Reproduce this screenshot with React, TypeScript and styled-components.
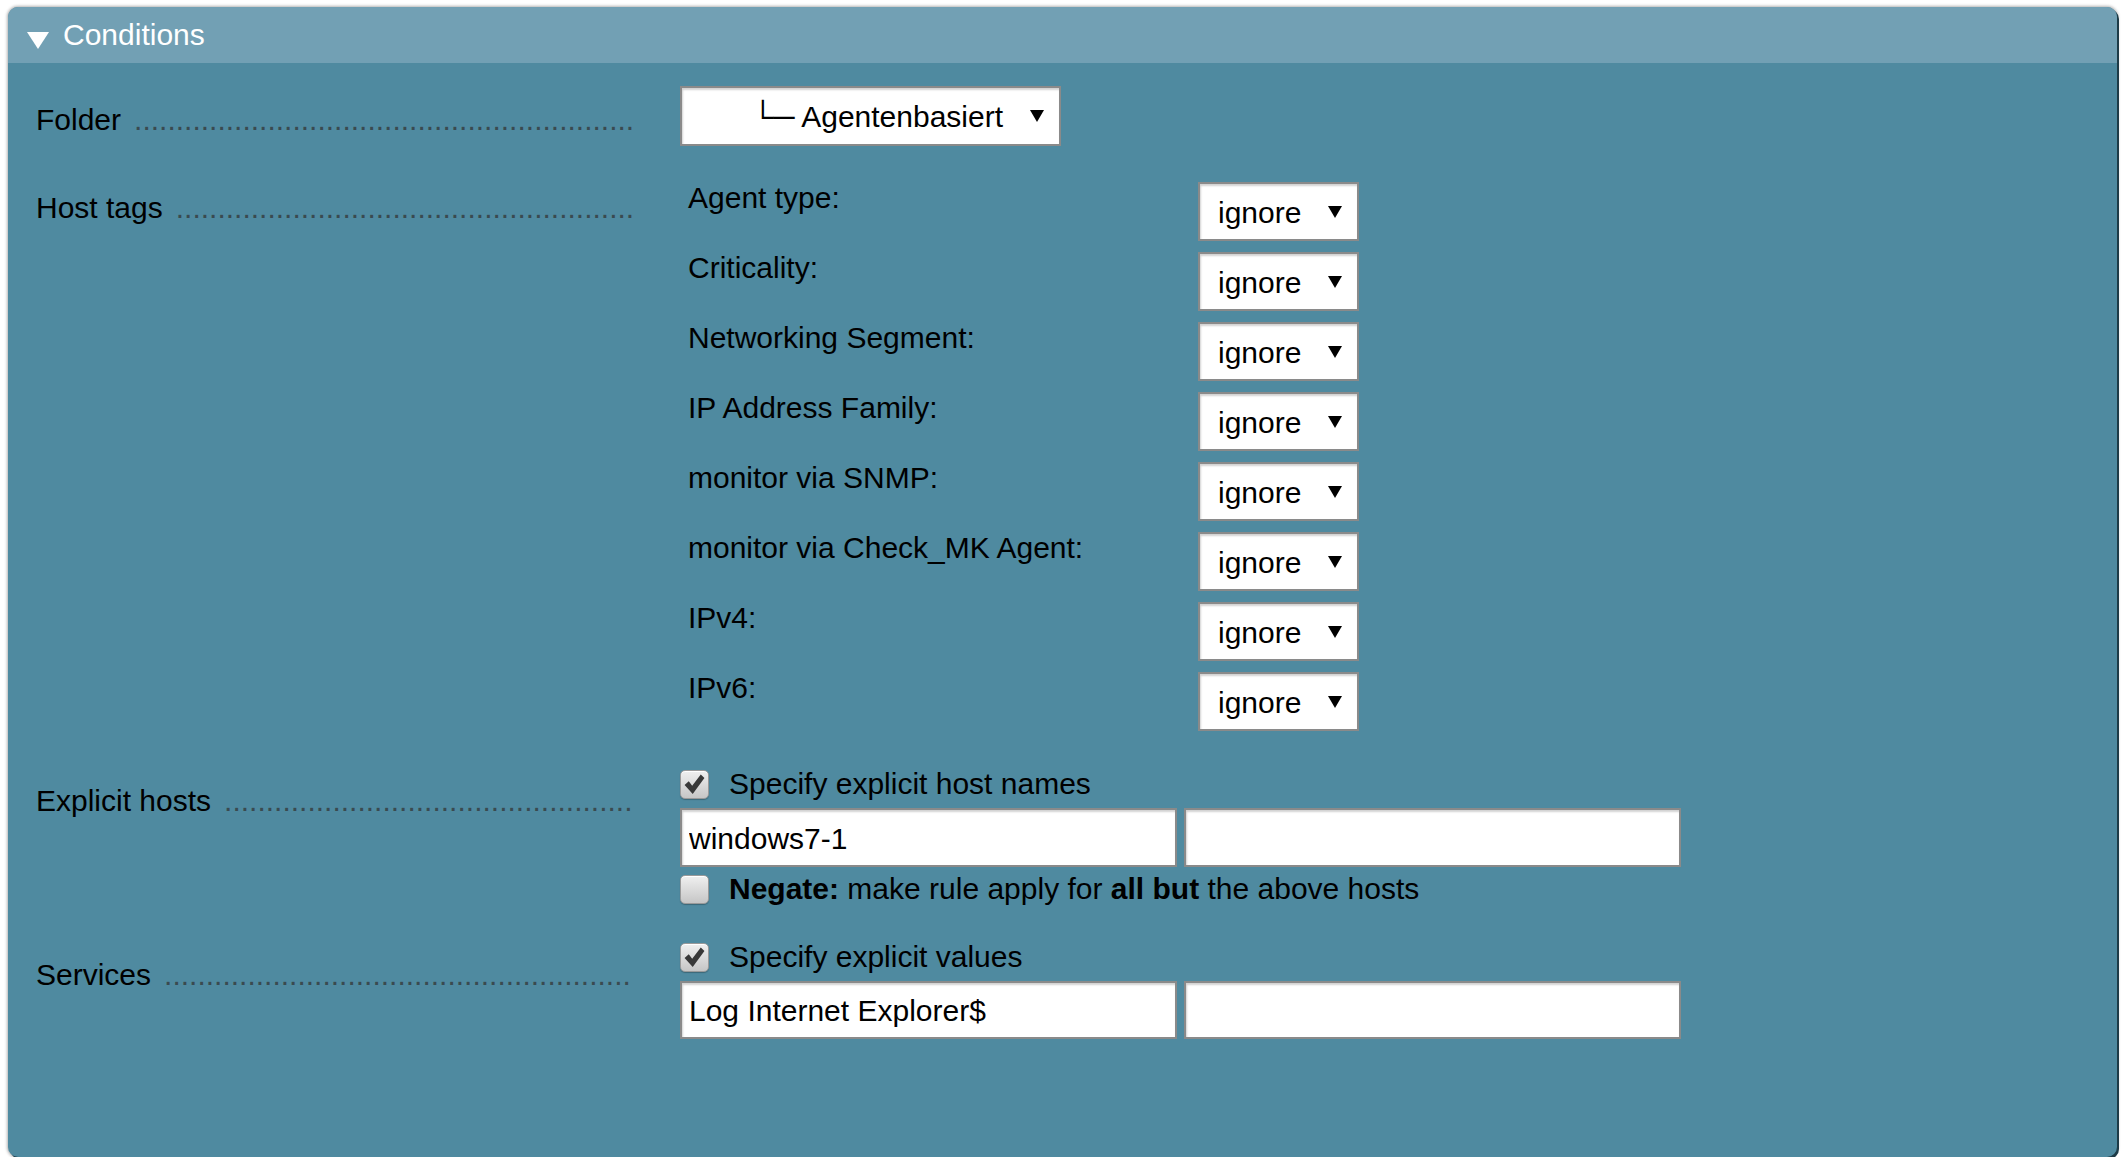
import React from "react";
import styled, { createGlobalStyle } from "styled-components";

const GlobalStyle = createGlobalStyle`
  html, body { margin: 0; padding: 0; background: #ffffff; }
  body {
    font-family: "Liberation Sans", Arial, Helvetica, sans-serif;
    font-size: 30px;
    color: #000;
  }
  * { box-sizing: border-box; }
`;

const Page = styled.div`
  padding: 7px 0 0 8px;
`;

const Panel = styled.section`
  width: 2109px;
  height: 1150px;
  display: flex;
  flex-direction: column;
  background: #4f8aa0;
  border-radius: 10px;
  overflow: hidden;
  box-shadow: 2px 2px 0 #1d3b47, 0 0 3px 1px rgba(0, 0, 0, 0.3);
`;

const Header = styled.header`
  height: 56px;
  flex: none;
  display: flex;
  align-items: center;
  gap: 14px;
  padding-left: 19px;
  background: #72a0b4;
  color: #ffffff;
  line-height: 34px;
`;

const Triangle = styled.span`
  width: 0;
  height: 0;
  margin-top: 11px;
  border-left: 11px solid transparent;
  border-right: 11px solid transparent;
  border-top: 17px solid #ffffff;
`;

const Body = styled.div`
  flex: 1;
  display: flex;
  flex-direction: column;
`;

const Row = styled.div`
  display: grid;
  grid-template-columns: 672px 1fr;
  align-items: start;
`;

const LabelCell = styled.div<{ $top: number }>`
  display: flex;
  align-items: baseline;
  padding: ${(p) => p.$top}px 45px 0 28px;
  line-height: 34px;
  white-space: nowrap;
`;

const Leader = styled.span`
  flex: 1;
  min-width: 0;
  overflow: hidden;
  margin-left: 13px;
  color: #3a4a50;
  white-space: nowrap;
`;

const ContentCell = styled.div<{ $top: number }>`
  padding-top: ${(p) => p.$top}px;
  display: flex;
  flex-direction: column;
  align-items: flex-start;
`;

const SelectBox = styled.div<{ $w: number; $h: number; $pl: number }>`
  width: ${(p) => p.$w}px;
  height: ${(p) => p.$h}px;
  display: flex;
  align-items: center;
  padding: 2px 15px 0 ${(p) => p.$pl}px;
  background: #ffffff;
  border: 2px solid #8a8a8a;
  box-shadow: inset 1px 2px 2px rgba(0, 0, 0, 0.18);
  line-height: 34px;
  white-space: nowrap;
`;

const Caret = styled.span`
  margin-left: auto;
  margin-top: -2px;
  width: 0;
  height: 0;
  border-left: 7px solid transparent;
  border-right: 7px solid transparent;
  border-top: 12px solid #000;
`;

const TagGrid = styled.div`
  display: grid;
  grid-template-columns: 518px 161px;
  row-gap: 11px;
`;

const TagLabel = styled.div`
  padding-left: 8px;
  line-height: 31px;
  white-space: nowrap;
`;

const CheckLine = styled.div`
  display: flex;
  align-items: center;
  gap: 20px;
  height: 34px;
  line-height: 34px;
  white-space: nowrap;
`;

const CheckBox = styled.span`
  width: 29px;
  height: 29px;
  flex: none;
  display: flex;
  align-items: center;
  justify-content: center;
  border: 1px solid #9a9a9a;
  border-radius: 5px;
  background: linear-gradient(#f0f0f0, #c6c6c6);
  box-shadow: inset 0 1px 0 #ffffff, 0 1px 1px rgba(0, 0, 0, 0.25);
`;

const InputRow = styled.div<{ $mt: number }>`
  display: flex;
  gap: 7px;
  margin-top: ${(p) => p.$mt}px;
`;

const TextInput = styled.input<{ $h: number }>`
  width: 497px;
  height: ${(p) => p.$h}px;
  margin: 0;
  padding: 2px 7px 0 7px;
  border: 2px solid #8a8a8a;
  border-radius: 0;
  background: #ffffff;
  box-shadow: inset 1px 2px 2px rgba(0, 0, 0, 0.18);
  font: inherit;
  font-size: 30px;
  color: #000;
  outline: none;
`;

const NegateLine = styled(CheckLine)`
  margin-top: 5px;
`;

const Check: React.FC<{ checked?: boolean }> = ({ checked }) => (
  <CheckBox>
    {checked && (
      <svg width="23" height="23" viewBox="0 0 22 22">
        <path
          d="M1.5 11.5 L5.5 8 L8.8 12.2 L17 1.5 L20.5 4.8 L9.3 20 Z"
          fill="#383838"
        />
      </svg>
    )}
  </CheckBox>
);

const Label: React.FC<{ top: number; text: string; dots: number }> = ({
  top,
  text,
  dots,
}) => (
  <LabelCell $top={top}>
    <span>{text}</span>
    <Leader>{".".repeat(dots)}</Leader>
  </LabelCell>
);

const TAGS = [
  "Agent type:",
  "Criticality:",
  "Networking Segment:",
  "IP Address Family:",
  "monitor via SNMP:",
  "monitor via Check_MK Agent:",
  "IPv4:",
  "IPv6:",
];

export default function App() {
  return (
    <Page>
      <GlobalStyle />
      <Panel>
        <Header>
          <Triangle />
          <span>Conditions</span>
        </Header>
        <Body>
          <Row>
            <Label top={40} text="Folder" dots={60} />
            <ContentCell $top={23}>
              <SelectBox $w={381} $h={60} $pl={70}>
                <span>└─ Agentenbasiert</span>
                <Caret />
              </SelectBox>
            </ContentCell>
          </Row>
          <Row>
            <Label top={45} text="Host tags" dots={55} />
            <ContentCell $top={36}>
              <TagGrid>
                {TAGS.map((t) => (
                  <React.Fragment key={t}>
                    <TagLabel>{t}</TagLabel>
                    <SelectBox $w={161} $h={59} $pl={18}>
                      <span>ignore</span>
                      <Caret />
                    </SelectBox>
                  </React.Fragment>
                ))}
              </TagGrid>
            </ContentCell>
          </Row>
          <Row>
            <Label top={53} text="Explicit hosts" dots={49} />
            <ContentCell $top={36}>
              <CheckLine>
                <Check checked />
                <span>Specify explicit host names</span>
              </CheckLine>
              <InputRow $mt={7}>
                <TextInput $h={59} readOnly defaultValue="windows7-1" />
                <TextInput $h={59} readOnly defaultValue="" />
              </InputRow>
              <NegateLine>
                <Check />
                <span>
                  <b>Negate:</b> make rule apply for <b>all but</b> the above hosts
                </span>
              </NegateLine>
            </ContentCell>
          </Row>
          <Row>
            <Label top={52} text="Services" dots={56} />
            <ContentCell $top={34}>
              <CheckLine>
                <Check checked />
                <span>Specify explicit values</span>
              </CheckLine>
              <InputRow $mt={7}>
                <TextInput $h={58} readOnly defaultValue="Log Internet Explorer$" />
                <TextInput $h={58} readOnly defaultValue="" />
              </InputRow>
            </ContentCell>
          </Row>
        </Body>
      </Panel>
    </Page>
  );
}
